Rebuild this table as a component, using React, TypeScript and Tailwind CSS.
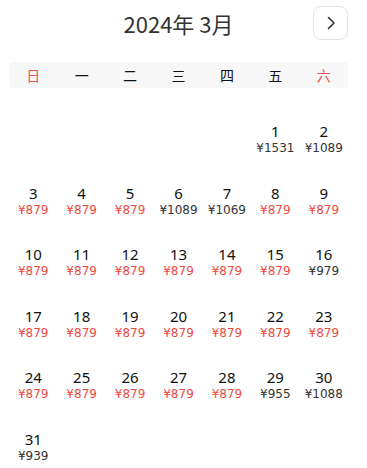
import React from 'react';

const weekDays = ['日', '一', '二', '三', '四', '五', '六'];

const prices: Record<number, number> = {
    1: 1531, 2: 1089, 3: 879, 4: 879, 5: 879, 6: 1089, 7: 1069, 8: 879, 9: 879,
    10: 879, 11: 879, 12: 879, 13: 879, 14: 879, 15: 879, 16: 979,
    17: 879, 18: 879, 19: 879, 20: 879, 21: 879, 22: 879, 23: 879,
    24: 879, 25: 879, 26: 879, 27: 879, 28: 879, 29: 955, 30: 1088, 31: 939,
};

// March 2024 starts on a Friday
const firstWeekday = 5;
const daysInMonth = 31;

export default function App() {
    const lowest = Math.min(...Object.values(prices));
    const cells: (number | null)[] = [
        ...Array(firstWeekday).fill(null),
        ...Array.from({ length: daysInMonth }, (_, i) => i + 1),
    ];

    return (
        <div className="w-[339px] ml-[9px] bg-white text-[#222]" style={{ fontFamily: '"DejaVu Sans", "Noto Sans CJK SC", sans-serif' }}>
            <div className="grid grid-cols-[1fr_auto_1fr] items-center h-[44px] pt-[1px]">
                <div />
                <div className="text-[22px] leading-[28px] text-[#333]" style={{ fontFamily: '"Noto Sans CJK SC", sans-serif' }}>
                    2024年 3月
                </div>
                <div className="flex justify-end">
                    <button className="w-[35px] h-[34px] rounded-[8px] border border-[#e4e4e4] flex items-center justify-center bg-white">
                        <svg width="14" height="14" viewBox="0 0 14 14" fill="none">
                            <path d="M4.5 1.5 L10 7 L4.5 12.5" stroke="#333" strokeWidth="1.6" strokeLinecap="round" strokeLinejoin="round" />
                        </svg>
                    </button>
                </div>
            </div>

            <div className="grid grid-cols-7 h-[26px] items-center mt-[18px] bg-[#f7f7f7] rounded-[4px]" style={{ fontFamily: '"Noto Sans CJK SC", sans-serif' }}>
                {weekDays.map((d, i) => (
                    <div key={d} className={`text-center text-[14px] leading-[16px] ${i === 0 || i === 6 ? 'text-[#e8524f]' : 'text-[#111]'}`}>
                        {d}
                    </div>
                ))}
            </div>

            <div className="grid grid-cols-7 auto-rows-[61.5px] mt-[33px]">
                {cells.map((day, idx) => (
                    <div key={idx} className="flex flex-col items-center">
                        {day && (
                            <>
                                <div className="text-[15px] leading-[20px] text-[#111]" style={{ fontFamily: '"Noto Sans", sans-serif' }}>{day}</div>
                                <div className={`text-[12px] leading-[14px] ${prices[day] === lowest ? 'text-[#ee4b3f]' : 'text-[#333]'}`}>
                                    ¥{prices[day]}
                                </div>
                            </>
                        )}
                    </div>
                ))}
            </div>
        </div>
    );
}
